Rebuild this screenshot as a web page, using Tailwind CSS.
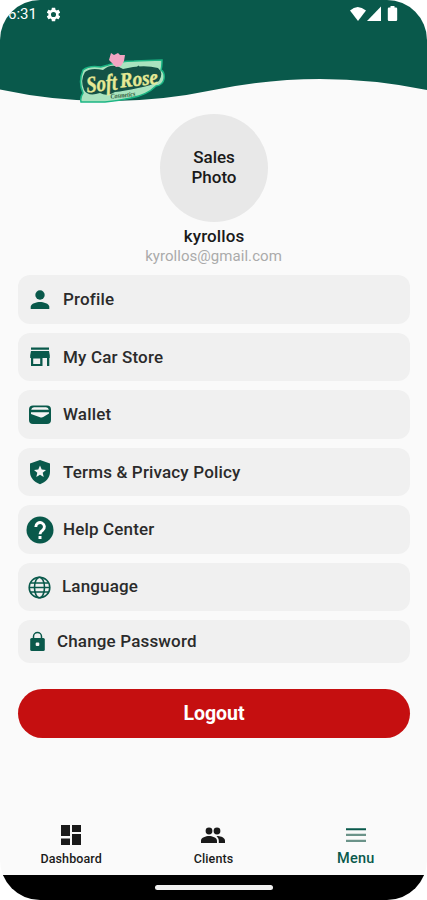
<!DOCTYPE html>
<html lang="en">
<head>
    <meta charset="UTF-8">
    <meta name="viewport" content="width=device-width, initial-scale=1.0">
    <title>Soft Rose - Menu</title>
    <script src="https://cdn.jsdelivr.net/npm/@tailwindcss/browser@4"></script>
</head>
<body class="bg-white">
    <div class="w-[427px] h-[900px] rounded-[40px] overflow-hidden bg-[#fafafa] flex flex-col font-['Roboto',sans-serif] text-[#1a1a1a]">

        <!-- Header -->
        <header class="relative h-[113.500px] shrink-0">
            <svg class="absolute inset-0" width="427" height="113" viewBox="0 0 427 113">
                <path d="M0 0H427V90Q320 68 213.500 90Q107 112.500 0 89.500Z" fill="#09594b"/>
            </svg>
            <div class="relative flex items-center h-7 pl-[8px] pr-[28px] text-white">
                <span class="text-[15px] leading-none">6:31</span>
                <svg class="ml-[8px]" width="17" height="17" viewBox="0 0 24 24" fill="currentColor"><path d="M19.140 12.940c.04-.3.060-.61.060-.94s-.02-.64-.07-.94l2.030-1.580c.18-.14.230-.41.120-.61l-1.920-3.320c-.12-.22-.37-.29-.59-.22l-2.390.96c-.5-.38-1.030-.7-1.620-.94L14.400 2.810c-.04-.24-.24-.41-.48-.41h-3.840c-.24 0-.43.17-.47.41L9.250 5.350c-.59.24-1.130.57-1.620.94L5.240 5.330c-.22-.08-.47 0-.59.220L2.740 8.870c-.12.21-.08.47.120.61l2.030 1.580c-.05.3-.09.63-.09.94s.02.64.070.94l-2.030 1.580c-.18.14-.23.41-.12.61l1.920 3.320c.12.220.37.290.59.220l2.390-.96c.5.380 1.030.7 1.620.94l.36 2.540c.05.240.240.410.480.410h3.840c.24 0 .440-.17.470-.41l.36-2.540c.59-.24 1.130-.56 1.620-.94l2.390.96c.22.080.470 0 .59-.22l1.920-3.320c.12-.22.070-.47-.12-.61zM12 15.600A3.600 3.600 0 1 1 12 8.400a3.600 3.600 0 0 1 0 7.200z"/></svg>
                <svg class="ml-auto" width="51" height="16" viewBox="0 0 51 16" fill="currentColor">
                    <path d="M2 4.500Q9.500 -2.500 18 4.500L10 15Z"/>
                    <path d="M33 .5V15H19Z"/>
                    <path d="M42.500 0h4v1.500h1.500q1.200 0 1.200 1.200V13.800q0 1.200-1.200 1.200h-7q-1.200 0-1.200-1.200V2.700q0-1.200 1.200-1.200h1.500Z"/>
                </svg>
            </div>

            <!-- Logo -->
            <svg class="absolute left-[78px] top-[50px]" width="90" height="56" viewBox="0 0 90 56">
                <path d="M5 20Q11 15 23 17L30 15Q42 11 56 11L84 10Q84 17 83 20Q87 22 86 29Q85 35 78 36Q69 45 53 48Q39 51 27 52L3 52Q2 47 5 43Q0 32 5 20Z" fill="#a9e3bf" stroke="#1bb584" stroke-width="1.500"/>
                <path d="M7 22Q13 17 25 20Q34 12 45 19L55 17Q69 15 80 18Q86 23 81 31Q73 36 60 38Q46 41 37 42Q29 47 22 43Q10 47 6 40Q2 30 7 22Z" fill="#145246"/>
                <path d="M33 3L36 5L40 3L42 5L47 5L46 11L43 16L38 17L34 13L31 10Z" fill="#f2a5c3"/>
                <path d="M41 18l4 3M58 19l3-3" stroke="#145246" stroke-width="1.500"/>
                <g transform="rotate(-6 43 32)" font-family="Liberation Serif, serif" font-style="italic" font-weight="bold">
                    <text x="8" y="39" font-size="23" textLength="31" lengthAdjust="spacingAndGlyphs" fill="#e6e995" stroke="#e6e995" stroke-width=".4">Soft</text>
                    <text x="42" y="37.500" font-size="21" textLength="38" lengthAdjust="spacingAndGlyphs" fill="#e6e995" stroke="#e6e995" stroke-width=".4">Rose</text>
                    <text x="31" y="47.500" font-size="7" textLength="25" lengthAdjust="spacingAndGlyphs" fill="#315d3d">Cosmetics</text>
                </g>
            </svg>
        </header>

        <!-- User -->
        <div class="flex flex-col items-center shrink-0 h-[161.500px]">
            <div class="size-[108px] ml-px pb-[2px] rounded-full bg-[#e8e8e8] flex items-center justify-center text-center text-[17px] leading-5 font-medium">Sales<br>Photo</div>
            <p class="mt-[4px] ml-px text-[17px] leading-5 font-medium tracking-[0.1px]">kyrollos</p>
            <p class="text-[15px] leading-5 tracking-[0.050px] text-[#aaaaaa]">kyrollos@gmail.com</p>
        </div>

        <!-- Menu -->
        <ul class="ml-[18px] mr-[17px] flex flex-col gap-[9px] text-[17px] font-medium tracking-[0.160px] text-[#2b2b2b] shrink-0">
            <li class="h-[48.500px] rounded-xl bg-[#f0f0f0] flex items-center pl-[10px] pt-px">
                <svg class="text-[#09594b]" width="24" height="28" viewBox="0 0 24 28" fill="currentColor"><circle cx="12" cy="9" r="4.700"/><path d="M2.700 23v-2.200c0-3.200 6.100-4.800 9.300-4.800s9.300 1.600 9.300 4.800V23z"/></svg>
                <span class="ml-[11px]">Profile</span>
            </li>
            <li class="h-[48.500px] rounded-xl bg-[#f0f0f0] flex items-center pl-[10px] pt-px">
                <svg class="text-[#09594b]" width="24" height="24" viewBox="0 0 24 24" fill="currentColor"><path d="M3 2.500h18v2.300H3zM21.800 13v-2.800L21 6H3l-.8 4.200V13H3v8h11.500v-8h4.500v8h2.300v-8zM5.200 19v-5.500h7V19z"/></svg>
                <span class="ml-[11px]">My Car Store</span>
            </li>
            <li class="h-[48.500px] rounded-xl bg-[#f0f0f0] flex items-center pl-[10px] pt-px">
                <svg class="text-[#09594b]" width="24" height="24" viewBox="0 0 24 24"><path fill="currentColor" d="M5 2.500h14a4 4 0 0 1 4 4V17a4 4 0 0 1-4 4H5a4 4 0 0 1-4-4V6.500a4 4 0 0 1 4-4z"/><path fill="#f4f4f4" d="M3.200 6.800Q3.500 4.300 6 4.300h12q2.500 0 2.800 2.500zM3 9.200h18v1.300l-5.800 3.600q-1.200.7-2.500.3L3 11z"/></svg>
                <span class="ml-[11px]">Wallet</span>
            </li>
            <li class="h-[48.500px] rounded-xl bg-[#f0f0f0] flex items-center pl-[10px] pt-px">
                <svg class="text-[#09594b]" width="24" height="26" viewBox="0 0 24 26" fill="currentColor"><path d="M12 1L22 4.500V13c0 5.500-4.200 10.200-10 12.200C6.200 23.200 2 18.500 2 13V4.500z"/><path fill="#f4f4f4" d="M12 6.500l1.700 4 4.300.4-3.300 2.900 1 4.200-3.700-2.300L8.300 18l1-4.200L6 10.900l4.300-.4z"/></svg>
                <span class="ml-[11px]">Terms &amp; Privacy Policy</span>
            </li>
            <li class="h-[48.500px] rounded-xl bg-[#f0f0f0] flex items-center pl-2 pt-px">
                <svg class="text-[#09594b]" width="28" height="28" viewBox="0 0 28 28"><circle cx="14" cy="14" r="13.500" fill="currentColor"/><path d="M9.800 11a4.300 4.300 0 1 1 6.800 3.300C14.800 15.500 14 16.200 14 18.200" fill="none" stroke="#fff" stroke-width="2.900"/><path d="M12.500 20h3v3h-3z" fill="#fff"/></svg>
                <span class="ml-[9px]">Help Center</span>
            </li>
            <li class="h-[48px] rounded-xl bg-[#f0f0f0] flex items-center pl-[10px] pt-px">
                <svg class="text-[#09594b]" width="23" height="23" viewBox="0 0 23 23" fill="none" stroke="currentColor" stroke-width="1.600"><circle cx="11.500" cy="11.500" r="10.300"/><ellipse cx="11.500" cy="11.500" rx="5" ry="10.300"/><path d="M1.500 11.500h20M2.500 7h18M2.500 16h18"/></svg>
                <span class="ml-[11px]">Language</span>
            </li>
            <li class="h-[43.500px] rounded-xl bg-[#f0f0f0] flex items-center pl-[11px] pt-px">
                <svg class="text-[#09594b]" width="17" height="21" viewBox="0 0 17 21"><path d="M4.500 8V5.500a4 4 0 0 1 8 0V8" fill="none" stroke="currentColor" stroke-width="1.500"/><rect x="1.200" y="7" width="14.600" height="13" rx="1.500" fill="currentColor"/><rect x="6.700" y="11.500" width="3.600" height="3.600" rx="1" fill="#f4f4f4"/></svg>
                <span class="ml-[11px]">Change Password</span>
            </li>
        </ul>

        <button class="ml-[18px] mr-[17px] mt-[26px] h-[48.500px] shrink-0 rounded-full bg-[#c50f10] text-white text-[19.500px] font-bold pt-px">Logout</button>

        <!-- Bottom nav -->
        <nav class="mt-auto h-[55px] grid grid-cols-3 shrink-0 text-[12.500px] font-medium tracking-[0.1px]">
            <a class="flex flex-col items-center pt-[3px]">
                <svg width="24" height="24" viewBox="0 0 24 24" fill="currentColor"><path d="M2 2h9v11H2zM13 2h9v7h-9zM2 15.500h9V22H2zM13 11h9v11h-9z"/></svg>
                <span class="mt-[4px] leading-4">Dashboard</span>
            </a>
            <a class="flex flex-col items-center pt-[3px]">
                <svg width="26" height="24" viewBox="0 0 26 24" fill="currentColor"><circle cx="9" cy="8" r="3.400"/><circle cx="17" cy="8" r="3.400"/><path d="M1 20v-2.300C1 14.500 6 13 9 13s8 1.500 8 4.700V20zM18 13.100c3 .3 7 1.700 7 4.600V20h-6.200v-2.300c0-1.900-.9-3.400-2.300-4.500z"/></svg>
                <span class="mt-[4px] leading-4">Clients</span>
            </a>
            <a class="flex flex-col items-center pt-[3px] text-[#09594b]">
                <svg width="24" height="24" viewBox="0 0 24 24"><path d="M2 5.200h20v2H2z" fill="#09594b"/><path d="M2 10.700h20v2.300H2zM2 16.800h20v2.300H2z" fill="#6b9389"/></svg>
                <span class="mt-[4px] text-[14.500px] leading-4 tracking-[0.3px]">Menu</span>
            </a>
        </nav>
        <div class="h-[25px] shrink-0 bg-black flex justify-center items-center">
            <div class="w-[118px] h-[5px] rounded-full bg-[#f0f0f0]"></div>
        </div>
    </div>
</body>
</html>
